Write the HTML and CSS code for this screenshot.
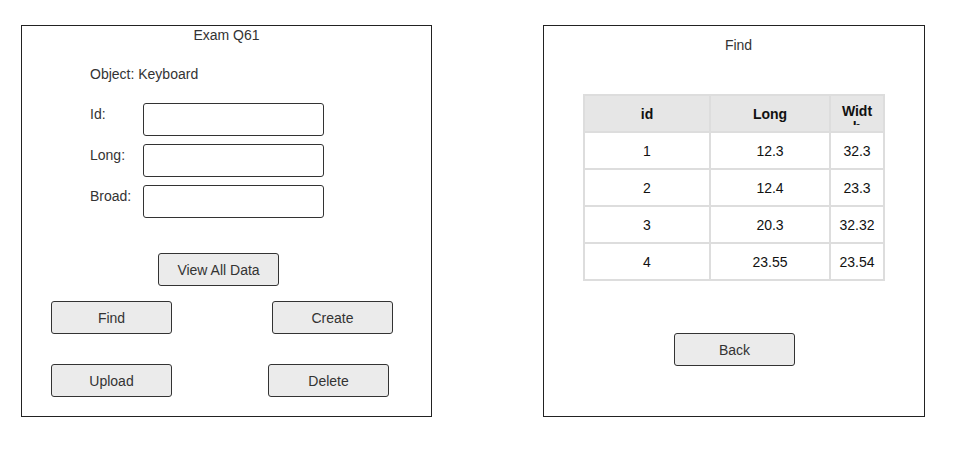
FILE: index.html
```html
<!DOCTYPE html>
<html lang="en">
<head>
  <meta charset="UTF-8">
  <meta name="viewport" content="width=device-width, initial-scale=1.0">
  <title>Exam Q61</title>
  <link rel="stylesheet" href="styles.css">
</head>
<body>

  <div class="screens">

    <div class="panel panel-form">
      <div class="panel-title">Exam Q61</div>
      <div class="object-name">Object: Keyboard</div>

      <div class="form">
        <label class="form-label">Id:</label>
        <input class="form-input" type="text">
        <label class="form-label">Long:</label>
        <input class="form-input" type="text">
        <label class="form-label">Broad:</label>
        <input class="form-input" type="text">
      </div>

      <div class="row row-view">
        <button class="btn">View All Data</button>
      </div>
      <div class="row row-one">
        <button class="btn">Find</button>
        <button class="btn btn-create">Create</button>
      </div>
      <div class="row row-two">
        <button class="btn">Upload</button>
        <button class="btn btn-delete">Delete</button>
      </div>
    </div>

    <div class="panel panel-find">
      <div class="panel-title find-title">Find</div>

      <table class="data-table">
        <thead>
          <tr>
            <th class="col-id">id</th>
            <th class="col-long">Long</th>
            <th class="col-width"><span class="clip">Width</span></th>
          </tr>
        </thead>
        <tbody>
          <tr><td>1</td><td>12.3</td><td>32.3</td></tr>
          <tr><td>2</td><td>12.4</td><td>23.3</td></tr>
          <tr><td>3</td><td>20.3</td><td>32.32</td></tr>
          <tr><td>4</td><td>23.55</td><td>23.54</td></tr>
        </tbody>
      </table>

      <div class="row row-back">
        <button class="btn">Back</button>
      </div>
    </div>

  </div>

</body>
</html>
```

FILE: styles.css
```css
body {
  margin: 0;
  background: #ffffff;
  font-family: 'Liberation Sans', Arial, sans-serif;
  font-size: 14px;
  color: #333333;
}

.screens {
  display: flex;
  gap: 111px;
  padding: 25px 0 0 21px;
}

.panel {
  box-sizing: border-box;
  height: 392px;
  border: 1px solid #222222;
  display: flex;
  flex-direction: column;
  align-items: flex-start;
}

.panel-form {
  width: 411px;
}

.panel-find {
  width: 382px;
}

.panel-title {
  align-self: stretch;
  text-align: center;
  line-height: 18px;
}

.find-title {
  margin-top: 10px;
  padding-left: 9px;
}

.object-name {
  margin: 21px 0 0 68px;
  line-height: 18px;
}

.form {
  display: grid;
  grid-template-columns: 53px 181px;
  row-gap: 8px;
  margin: 20px 0 0 68px;
}

.form-label {
  line-height: 18px;
  padding-top: 2px;
}

.form-input {
  box-sizing: border-box;
  width: 181px;
  height: 33px;
  margin: 0;
  border: 1px solid #333333;
  border-radius: 3px;
  background: #ffffff;
}

.row {
  display: flex;
}

.btn {
  box-sizing: border-box;
  width: 121px;
  height: 33px;
  margin: 0;
  padding: 0;
  font-family: inherit;
  font-size: 14px;
  color: #333333;
  background: #ebebeb;
  border: 1px solid #333333;
  border-radius: 3px;
}

.row-view {
  margin: 35px 0 0 136px;
}

.row-one {
  margin: 15px 0 0 29px;
  gap: 100px;
}

.row-two {
  margin: 30px 0 0 29px;
  gap: 96px;
}

.data-table {
  margin: 40px 0 0 39px;
  border-collapse: collapse;
  text-align: center;
  color: #111111;
}

.data-table th,
.data-table td {
  border: 2px solid #dddddd;
  height: 35px;
  padding: 0;
}

.data-table th {
  background: #e6e6e6;
  font-weight: bold;
}

.col-id {
  width: 124px;
}

.col-long {
  width: 118px;
}

.col-width {
  width: 52px;
  vertical-align: top;
}

.clip {
  display: block;
  width: 32px;
  height: 22px;
  margin: 7px auto 0;
  overflow: hidden;
  word-break: break-all;
  line-height: 16px;
}

.row-back {
  margin: 52px 0 0 130px;
}
```
